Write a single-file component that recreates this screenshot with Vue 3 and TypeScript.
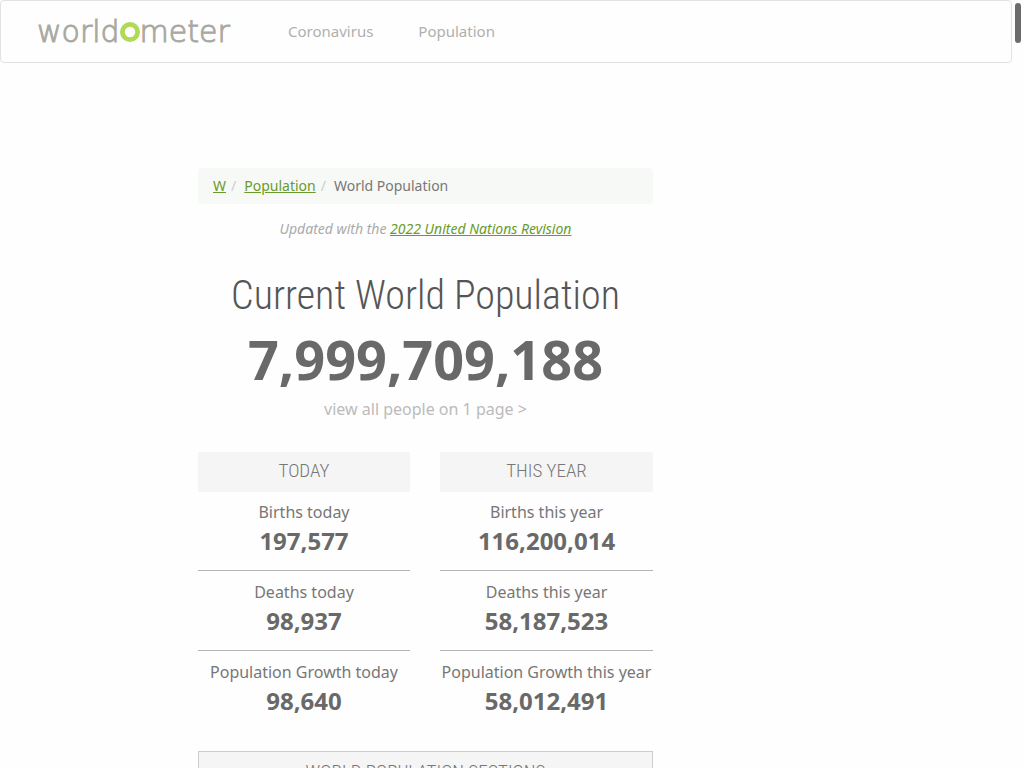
<script setup lang="ts">
interface Counter {
  label: string
  value: string
}

interface CounterGroup {
  title: string
  counters: Counter[]
}

const navLinks: string[] = ['Coronavirus', 'Population']

const groups: CounterGroup[] = [
  {
    title: 'TODAY',
    counters: [
      { label: 'Births today', value: '197,577' },
      { label: 'Deaths today', value: '98,937' },
      { label: 'Population Growth today', value: '98,640' },
    ],
  },
  {
    title: 'THIS YEAR',
    counters: [
      { label: 'Births this year', value: '116,200,014' },
      { label: 'Deaths this year', value: '58,187,523' },
      { label: 'Population Growth this year', value: '58,012,491' },
    ],
  },
]
</script>

<template>
  <div class="page">
    <header class="navbar">
      <a class="logo" href="#" aria-label="worldometer">
        <span>world</span>
        <svg class="ring" viewBox="0 0 20 20" aria-hidden="true">
          <circle cx="10" cy="10" r="7.6" />
        </svg>
        <span>meter</span>
      </a>
      <nav class="links">
        <a v-for="link in navLinks" :key="link" href="#">{{ link }}</a>
      </nav>
    </header>

    <main class="content">
      <ol class="breadcrumb">
        <li><a href="#">W</a></li>
        <li><a href="#">Population</a></li>
        <li>World Population</li>
      </ol>
      <p class="updated">Updated with the <a href="#">2022 United Nations Revision</a></p>

      <h1>Current World Population</h1>
      <div class="total">7,999,709,188</div>
      <a class="view-all" href="#">view all people on 1 page &gt;</a>

      <div class="groups">
        <section v-for="group in groups" :key="group.title">
          <h2>{{ group.title }}</h2>
          <div v-for="counter in group.counters" :key="counter.label" class="counter">
            <div class="label">{{ counter.label }}</div>
            <div class="value">{{ counter.value }}</div>
          </div>
        </section>
      </div>

      <h2 class="sections">WORLD POPULATION SECTIONS</h2>
    </main>

    <div class="scroll-thumb" aria-hidden="true"></div>
  </div>
</template>

<style>
body {
  background: #fefefe;
  overflow: hidden;
}
</style>

<style scoped>
.page {
  height: 100vh;
  overflow: hidden;
  padding-right: 12px;
  box-sizing: border-box;
  font-family: "Noto Sans", "Open Sans", sans-serif;
  color: #777;
}

.navbar {
  display: flex;
  align-items: center;
  height: 63px;
  box-sizing: border-box;
  padding: 0 0 2px 36px;
  border: 1px solid #e2e2e2;
  border-radius: 4px;
}

.logo {
  display: flex;
  align-items: baseline;
  width: 196px;
  padding-top: 2px;
  font-family: "DejaVu Sans", sans-serif;
  font-weight: 200;
  font-size: 30px;
  line-height: 36px;
  color: #a9a9a2;
  -webkit-text-stroke: 1px #a9a9a2;
  text-decoration: none;
}

.ring {
  width: 20px;
  height: 20px;
  fill: none;
  stroke: #b0d955;
  stroke-width: 4.8;
}

.links {
  display: flex;
  gap: 45px;
  margin-left: 55px;
}

.links a {
  font-size: 15px;
  line-height: 20px;
  color: #b0b0ac;
  text-decoration: none;
}

.content {
  width: 455px;
  margin: 105px 0 0 198px;
  text-align: center;
}

.breadcrumb {
  display: flex;
  margin: 0;
  padding: 8px 15px;
  list-style: none;
  background: #f7f9f7;
  border-radius: 4px;
  font-size: 14px;
  line-height: 20px;
}

.breadcrumb li + li::before {
  content: "/";
  padding: 0 8px 0 5px;
  color: #ccc;
}

.breadcrumb a,
.updated a {
  color: #699b2c;
}

.updated {
  margin: 15px 0 0;
  font-size: 14px;
  line-height: 20px;
  font-style: italic;
  color: #aaa;
}

h1,
h2 {
  font-family: "Roboto Condensed", Roboto, sans-serif;
  font-weight: 300;
}

h1 {
  margin: 33px 0 0;
  font-size: 40px;
  line-height: 48px;
  color: #555;
  white-space: nowrap;
}

.total {
  margin-top: 2px;
  font-size: 54px;
  line-height: 74px;
  font-weight: 700;
  color: #696969;
}

.view-all {
  display: block;
  margin-top: 2px;
  font-size: 16px;
  line-height: 22px;
  color: #bbb;
  text-decoration: none;
}

.groups {
  display: grid;
  grid-template-columns: 212px 1fr;
  gap: 30px;
  margin-top: 32px;
}

h2 {
  margin: 0;
  padding: 9px 0 11px;
  background: #f5f5f5;
  font-size: 19px;
  line-height: 20px;
  color: #777;
}

.counter {
  height: 80px;
  box-sizing: border-box;
  padding-top: 9px;
  white-space: nowrap;
}

.counter:nth-of-type(1) {
  height: 78px;
}

.counter + .counter {
  padding-top: 10px;
  border-top: 1px solid #b5b5b5;
}

.label {
  font-size: 16px;
  line-height: 22px;
}

.value {
  font-size: 24px;
  line-height: 36px;
  font-weight: 700;
  color: #696969;
}

.sections {
  margin-top: 21px;
  padding-top: 10px;
  border: 1px solid #ccc;
}

.scroll-thumb {
  position: fixed;
  top: 3px;
  right: 3px;
  width: 6px;
  height: 40px;
  border-radius: 3px;
  background: #6c6c6c;
}
</style>
